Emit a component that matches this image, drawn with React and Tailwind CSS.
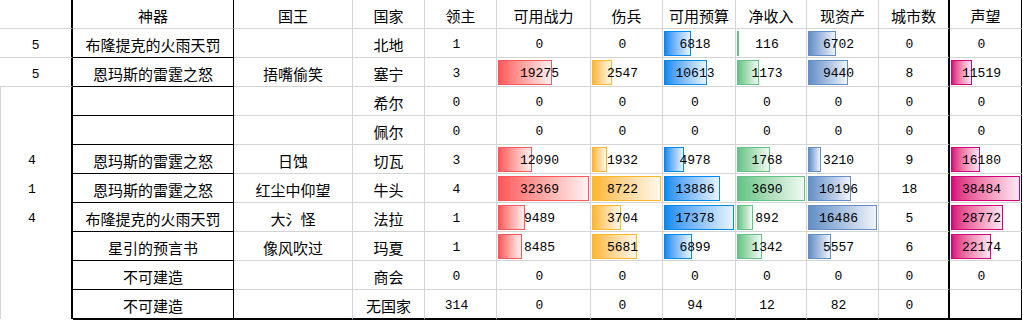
import React from "react";

const GRAY = "#d4d4d4";

const headers = ["", "神器", "国王", "国家", "领主", "可用战力", "伤兵", "可用预算", "净收入", "现资产", "城市数", "声望"];

const rows = [
  [5, "布隆提克的火雨天罚", "", "北地", 1, 0, 0, 6818, 116, 6702, 0, 0],
  [5, "恩玛斯的雷霆之怒", "捂嘴偷笑", "塞宁", 3, 19275, 2547, 10613, 1173, 9440, 8, 11519],
  ["", "", "", "希尔", 0, 0, 0, 0, 0, 0, 0, 0],
  ["", "", "", "佩尔", 0, 0, 0, 0, 0, 0, 0, 0],
  [4, "恩玛斯的雷霆之怒", "日蚀", "切瓦", 3, 12090, 1932, 4978, 1768, 3210, 9, 16180],
  [1, "恩玛斯的雷霆之怒", "红尘中仰望", "牛头", 4, 32369, 8722, 13886, 3690, 10196, 18, 38484],
  [4, "布隆提克的火雨天罚", "大氵怪", "法拉", 1, 9489, 3704, 17378, 892, 16486, 5, 28772],
  ["", "星引的预言书", "像风吹过", "玛夏", 1, 8485, 5681, 6899, 1342, 5557, 6, 22174],
  ["", "不可建造", "", "商会", 0, 0, 0, 0, 0, 0, 0, 0],
  ["", "不可建造", "", "无国家", 314, 0, 0, 94, 12, 82, 0, ""],
];

const widths = [73, 161, 119, 72, 72, 94, 72, 73, 71, 72, 71, 72];

const rightBorder = [
  "border-r-2 border-r-black",
  "border-r border-r-black",
  "border-r border-r-[#d4d4d4]",
  "border-r border-r-[#d4d4d4]",
  "border-r border-r-[#d4d4d4]",
  "border-r border-r-[#d4d4d4]",
  "border-r border-r-[#d4d4d4]",
  "border-r border-r-[#d4d4d4]",
  "border-r border-r-[#d4d4d4]",
  "border-r border-r-[#d4d4d4]",
  "border-r-2 border-r-black",
  "border-r border-r-black",
];

const bars = {
  5: { max: 32369, cls: "border-[#FF555A] bg-linear-to-r from-[#FF555A] to-[#FFF0F1]" },
  6: { max: 8722, cls: "border-[#FFB628] bg-linear-to-r from-[#FFB628] to-[#FFF8EA]" },
  7: { max: 17378, cls: "border-[#008AEF] bg-linear-to-r from-[#008AEF] to-[#E8F4FD]" },
  8: { max: 3690, cls: "border-[#63C384] bg-linear-to-r from-[#63C384] to-[#F0F9F3]" },
  9: { max: 16486, cls: "border-[#638EC6] bg-linear-to-r from-[#638EC6] to-[#F0F4F9]" },
  11: { max: 38484, cls: "border-[#D6007B] bg-linear-to-r from-[#D6007B] to-[#FBE8F3]" },
};

function bottomBorder(ri, ci, isLast) {
  // ri: -1 header
  if (ci === 0) {
    if (ri <= 1) return "border-b border-b-[#d4d4d4]";
    return "border-l border-l-[#d4d4d4]";
  }
  if (isLast) return "border-b-2 border-b-black";
  if (ci === 1 && ri >= 0) return "border-b border-b-black";
  return "border-b border-b-[#d4d4d4]";
}

function Cell({ value, ri, ci, isLast }) {
  const isNum = typeof value === "number";
  const h = isLast ? "h-[30px]" : "h-[29px]";
  const bar = bars[ci];
  let barW = 0;
  if (bar && isNum && value > 0) {
    barW = Math.round((value / bar.max) * (widths[ci] - 3));
  }
  const font = isNum
    ? ci === 0 && ri <= 1
      ? "font-['Liberation_Sans',sans-serif] text-[13px]"
      : "font-['Liberation_Mono',monospace] text-[13px] pr-[8px]"
    : "font-['Noto_Sans_CJK_SC',sans-serif] text-[15px]";
  return (
    <div
      className={`relative ${h} flex items-center justify-center bg-white text-black leading-none ${rightBorder[ci]} ${bottomBorder(ri, ci, isLast)}`}
    >
      {barW >= 1 && (
        <div
          className={`absolute left-[1px] top-[2px] bottom-[1px] border ${bar.cls}`}
          style={{ width: Math.max(barW, 2) }}
        />
      )}
      <span className={`relative whitespace-nowrap pt-[2px] ${font}`}>{value}</span>
    </div>
  );
}

export default function App() {
  return (
    <div className="w-[1023px] h-[320px] bg-white overflow-hidden">
      <div className="grid grid-cols-[73px_161px_119px_72px_72px_94px_72px_73px_71px_72px_71px_72px]">
        {headers.map((h, ci) => (
          <Cell key={"h" + ci} value={h} ri={-1} ci={ci} isLast={false} />
        ))}
        {rows.map((r, ri) =>
          r.map((v, ci) => (
            <Cell key={ri + "-" + ci} value={v} ri={ri} ci={ci} isLast={ri === rows.length - 1 && ci !== 0} />
          ))
        )}
      </div>
    </div>
  );
}
